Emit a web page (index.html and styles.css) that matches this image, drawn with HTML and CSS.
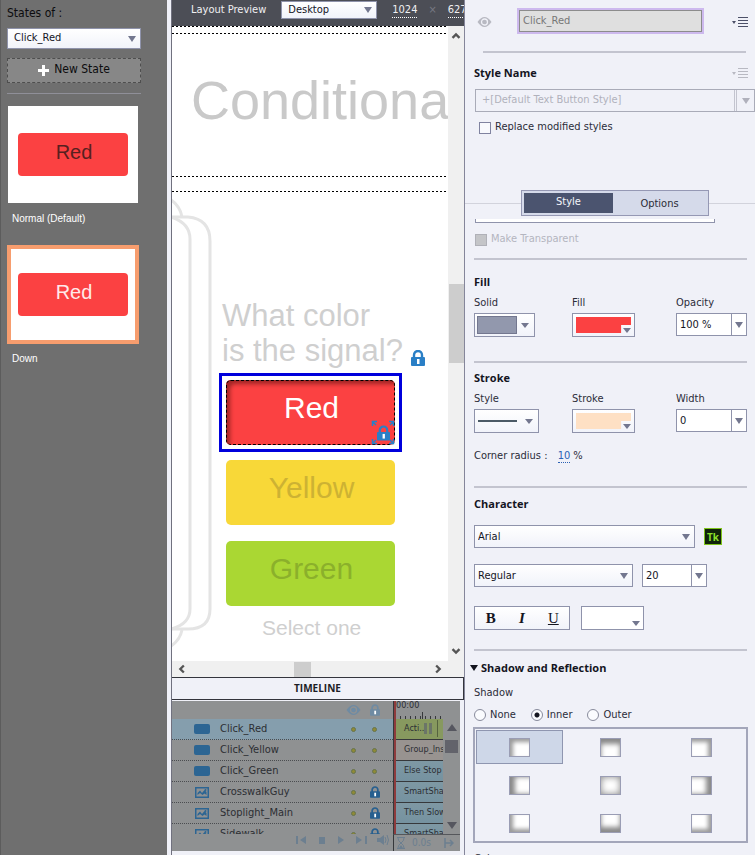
FILE: index.html
```html
<!DOCTYPE html>
<html lang="en">
<head>
<meta charset="utf-8">
<title>Object states</title>
<link rel="stylesheet" href="styles.css">
</head>
<body>
<svg class="defs" aria-hidden="true">
  <symbol id="lock" viewBox="0 0 14 16"><path d="M3 8V5a4 4 0 0 1 8 0v3" fill="none" stroke="currentColor" stroke-width="2.400"/><rect y="7" width="14" height="9" rx="1" fill="currentColor"/><rect class="keyhole" x="6" y="9" width="2.500" height="5"/></symbol>
  <symbol id="eye" viewBox="0 0 14 10"><path d="M0 5Q7-5 14 5Q7 15 0 5Z" fill="currentColor"/><circle cx="7" cy="5" r="3" fill="none" stroke="var(--hole)" stroke-width="1.300"/></symbol>
  <symbol id="image" viewBox="0 0 14 11"><rect x=".75" y=".75" width="12.500" height="9.500" fill="none" stroke="currentColor" stroke-width="1.500"/><path d="M2.500 8V6L5 3.500L7 6L9.500 3L11.500 5V8L9.500 6.500L7.500 8L5 6Z" fill="currentColor"/><circle cx="10.500" cy="3" r="1" fill="currentColor"/></symbol>
  <symbol id="menu" viewBox="0 0 16 11"><path d="M0 4h4L2 7Z" fill="currentColor"/><path d="M6 .5h10M6 3.500h10M6 6.500h10M6 9.500h10" stroke="currentColor"/></symbol>
</svg>
<main class="app">
  <aside class="states">
    <label class="states-label" for="state-of">States of :</label>
    <div class="pick"><select id="state-of"><option>Click_Red</option></select></div>
    <button class="new-state"><svg viewBox="0 0 11 11"><path d="M4 0h3v4h4v3H7v4H4V7H0V4h4Z" fill="#fff"/></svg>New State</button>
    <hr>
    <figure><div class="thumb"><span class="chip">Red</span></div><figcaption>Normal (Default)</figcaption></figure>
    <figure><div class="thumb active"><span class="chip">Red</span></div><figcaption>Down</figcaption></figure>
  </aside>

  <section class="work">
    <header class="preview">
      <label for="device">Layout Preview</label>
      <div class="pick"><select id="device"><option>Desktop</option></select></div>
      <a href="#w">1024</a><i>×</i><a href="#h">627</a>
    </header>
    <div class="stage">
      <div class="canvas">
        <div class="band top"></div>
        <h1>Conditiona</h1>
        <div class="band"></div>
        <div class="slide">
          <svg class="cards" viewBox="0 0 42 470" fill="none" stroke="#e4e4e4" stroke-width="3"><path d="M-1 8Q8 14 10 25"/><path d="M-1 25H16Q38 27 38 49V417Q38 437 16 437H-1"/><path d="M-1 25Q18 31 18 47V417Q18 432 -1 437"/><path d="M10 438Q8 448 -1 454"/></svg>
          <p class="question">What color<br>is the signal?<svg class="lock"><use href="#lock"/></svg></p>
          <div class="selection"><button class="answer red">Red<svg class="lock" viewBox="0 0 24 25"><path d="M1.500 6V1.500H6M1 1L5 5M18 1.500H22.500V6M23 1L19 5M1.500 19V23.500H6M1 24L5 20M18 23.500H22.500V19M23 24L19 20" fill="none" stroke="currentColor" stroke-width="1.500"/><use href="#lock" x="6" y="4" width="13" height="18"/></svg></button></div>
          <button class="answer yellow">Yellow</button>
          <button class="answer green">Green</button>
          <p class="hint">Select one</p>
        </div>
      </div>
      <div class="vbar"><svg viewBox="0 0 8 6"><path d="M1 5L4 2L7 5"/></svg><b></b><svg viewBox="0 0 8 6"><path d="M1 1L4 4L7 1"/></svg></div>
      <div class="hbar"><svg viewBox="0 0 6 8"><path d="M5 1L2 4L5 7"/></svg><b></b><svg viewBox="0 0 6 8"><path d="M1 1L4 4L1 7"/></svg></div>
    </div>
    <h2 class="timeline-title">TIMELINE</h2>
    <div class="timeline">
      <div class="layers">
        <div class="layer head"><span></span><span></span><svg class="eye"><use href="#eye"/></svg><svg class="lock"><use href="#lock"/></svg></div>
        <div class="layer on"><b></b><span>Click_Red</span><i></i><i></i></div>
        <div class="layer"><b></b><span>Click_Yellow</span><i></i><i></i></div>
        <div class="layer"><b></b><span>Click_Green</span><i></i><i></i></div>
        <div class="layer"><svg class="image"><use href="#image"/></svg><span>CrosswalkGuy</span><i></i><svg class="lock"><use href="#lock"/></svg></div>
        <div class="layer"><svg class="image"><use href="#image"/></svg><span>Stoplight_Main</span><i></i><svg class="lock"><use href="#lock"/></svg></div>
        <div class="layer"><svg class="image"><use href="#image"/></svg><span>Sidewalk</span><i></i><svg class="lock"><use href="#lock"/></svg></div>
      </div>
      <div class="tracks">
        <div class="ruler"><span>00:00</span></div>
        <div class="track act">Acti..<svg viewBox="0 0 16 17"><path d="M1 3h3v11H1ZM6 3h3v11H6Z" fill="#6b7568"/><path d="M14.500 0v17" stroke="#56633f"/></svg></div>
        <div class="track grp">Group_Ins</div>
        <div class="track">Else Stop</div>
        <div class="track">SmartSha</div>
        <div class="track">Then Slow</div>
        <div class="track">SmartSha</div>
      </div>
      <div class="tbar"><svg viewBox="0 0 10 7"><path d="M0 7L5 0L10 7Z"/></svg><b></b><svg viewBox="0 0 10 7"><path d="M0 0L5 7L10 0Z"/></svg></div>
      <div class="player">
        <svg viewBox="0 0 94 12"><path d="M1 2h2v8H1ZM11 2v8L5 6ZM24 3h6v7h-6ZM43 2v8L49 6ZM61 2v8L67 6ZM70 2h2v8h-2ZM82 4h3l4-3v10l-4-3h-3Z" fill="currentColor"/><path d="M90 3q2 3 0 6M92 1q3 5 0 10" fill="none" stroke="currentColor"/></svg>
      </div>
      <div class="time"><svg viewBox="0 0 8 12"><path d="M0 .5h8M0 11.500h8M1 1q0 3 3 5q-3 2-3 5M7 1q0 3-3 5q3 2 3 5" fill="none" stroke="currentColor"/><path d="M2 11l2-3l2 3Z" fill="currentColor"/></svg><span>0.0s</span><svg viewBox="0 0 10 10"><path d="M1 0v10M1 5h8M6 2l3 3l-3 3" fill="none" stroke="currentColor" stroke-width="1.500"/></svg></div>
    </div>
  </section>

  <aside class="props">
    <div class="object"><svg class="eye"><use href="#eye"/></svg><input aria-label="Object name" value="Click_Red"><svg class="menu"><use href="#menu"/></svg></div>
    <hr class="first">
    <div class="style-head"><h3>Style Name</h3><svg class="menu"><use href="#menu"/></svg></div>
    <div class="pick style-name"><select aria-label="Style name" disabled><option>+[Default Text Button Style]</option></select></div>
    <label class="check replace"><input type="checkbox">Replace modified styles</label>
    <div class="tabs"><div><button class="current">Style</button><button>Options</button></div></div>
    <div class="cut"></div>
    <label class="check"><input type="checkbox" disabled>Make Transparent</label>
    <hr>
    <section class="fill">
      <h3>Fill</h3>
      <div class="trio">
        <div><label for="solid">Solid</label><button id="solid" class="swatch solid"><span></span></button></div>
        <div><label for="fill">Fill</label><button id="fill" class="swatch color"><span></span></button></div>
        <div><label for="opacity">Opacity</label><div class="pick num"><select id="opacity"><option>100 %</option></select></div></div>
      </div>
    </section>
    <hr>
    <section class="stroke">
      <h3>Stroke</h3>
      <div class="trio">
        <div><label for="line">Style</label><button id="line" class="swatch line"><span></span></button></div>
        <div><label for="stroke">Stroke</label><button id="stroke" class="swatch color peach"><span></span></button></div>
        <div><label for="width">Width</label><div class="pick num"><select id="width"><option>0</option></select></div></div>
      </div>
      <p class="radius">Corner radius : <a href="#radius">10</a> %</p>
    </section>
    <hr>
    <section class="character">
      <h3>Character</h3>
      <div class="row"><div class="pick family"><select aria-label="Font family"><option>Arial</option></select></div><button class="tk">Tk</button></div>
      <div class="row"><div class="pick weight"><select aria-label="Font style"><option>Regular</option></select></div><div class="pick num"><select aria-label="Font size"><option>20</option></select></div></div>
      <div class="row"><div class="biu"><button><b>B</b></button><button><i>I</i></button><button><u>U</u></button></div><button class="swatch color white" aria-label="Text colour"><span></span></button></div>
    </section>
    <hr>
    <section class="shadow">
      <h3>Shadow and Reflection</h3>
      <p>Shadow</p>
      <div class="radios"><label><input type="radio" name="s">None</label><label><input type="radio" name="s" checked>Inner</label><label><input type="radio" name="s">Outer</label></div>
      <div class="presets">
        <button class="tl chosen"><span></span></button><button class="t"><span></span></button><button class="tr"><span></span></button>
        <button class="l"><span></span></button><button class="c"><span></span></button><button class="r"><span></span></button>
        <button class="bl"><span></span></button><button class="b"><span></span></button><button class="br"><span></span></button>
      </div>
      <p class="next">Color</p>
    </section>
  </aside>
</main>
</body>
</html>
```
FILE: styles.css
```css
* { box-sizing: border-box; margin: 0; padding: 0; }
body { background: #f0f1f8; color: #2b2c38; font: 11px/16px "DejaVu Sans Condensed", "Noto Sans", sans-serif; }
button, input, select { font: inherit; color: inherit; border: 0; border-radius: 0; background: none; }
button { line-height: 1; }
svg { display: block; flex: none; }
h3 { font: bold 11px/16px "Open Sans", sans-serif; color: #14151f; }
.defs { position: absolute; width: 0; height: 0; }
.keyhole { fill: #fff; }
.lock { width: 14px; height: 16px; color: #2a7fc6; }
.eye { width: 15px; height: 10px; --hole: #f0f1f8; }

.app { display: grid; grid-template-columns: 167px minmax(0, 1fr) 290px; height: 100vh; overflow: hidden; }

/* drop-downs */
.pick { position: relative; height: 23px; border: 1px solid #8f93ab; background: linear-gradient(#fff, #f1f3fa); }
.pick select { display: block; appearance: none; width: 100%; height: 100%; padding-left: 6px; color: #14151f; opacity: 1; }
.pick::after { content: ""; position: absolute; right: 4px; top: 50%; margin-top: -3px; border: 4px solid transparent; border-top: 6px solid #73778f; border-bottom: 0; pointer-events: none; }
.num { width: 71px; background: linear-gradient(#8f93ab, #8f93ab) right 14px top / 1px 100% no-repeat, #fff; }
.num select { padding-left: 3px; }
.num::after { right: 3px; }

/* states panel */
.states { padding: 5px 26px 0 6px; background: #6f6f6f; border-left: 1px solid #5c5c5c; color: #0c0c0e; }
.states-label { display: block; font-size: 12px; }
.states .pick { height: 21px; margin-top: 7px; }
.states .pick select { padding-bottom: 2px; }
.new-state { display: flex; align-items: center; justify-content: center; gap: 5px; width: 100%; height: 25px; margin-top: 9px; padding-bottom: 4px; border: 1px dashed #4e4e4e; background: #878787; font-size: 12px; }
.new-state svg { width: 11px; height: 11px; margin-top: 4px; }
.states hr { border: 0; border-top: 1px solid #8f8f98; margin: 10px 0 11px; }
.thumb { display: flex; height: 99px; padding: 10px; border: 1px solid #6f6f6f; background: #fff; width: 132px; }
.thumb.active { border: 4px solid #f79d6e; padding: 7px; }
.chip { flex: 1; height: 43px; margin: 17px 0 0; border-radius: 4px; background: #fb4142; color: #57201f; font: 20px/38px "Liberation Sans", sans-serif; text-align: center; }
.chip { padding-left: 2px; }
.active .chip { color: #ffe9e9; }
.states figcaption { margin: 7px 0 18px 5px; font: 10px/16px "Liberation Sans", sans-serif; color: #fff; }

/* work area */
.work { display: flex; flex-direction: column; min-width: 0; border-left: 4px solid #f0f1f8; border-right: 1px solid #85869a; box-shadow: inset 1px 0 #70717f; padding-left: 1px; }
.preview { display: flex; align-items: flex-start; height: 26px; padding: 2px 0 0 19px; background: #4c4e56; color: #f0f0f2; overflow: hidden; white-space: nowrap; }
.preview .pick { flex: none; width: 96px; height: 18px; margin: -1px 15px 0; }
.preview .pick select { padding-bottom: 3px; }
.preview a { color: inherit; text-decoration: none; border-bottom: 1px dotted #fff; line-height: 15px; }
.preview i { margin: 0 11px; font-style: normal; color: #777983; }
.stage { display: grid; grid-template: minmax(0, 1fr) 16px / minmax(0, 1fr) 16px; flex: 1; min-height: 0; background: #f0f0f0; }
.canvas { background: #fff; overflow: hidden; font-family: "Liberation Sans", sans-serif; }
.band { height: 16px; background: repeating-linear-gradient(90deg, #000 0 2px, transparent 2px 4px) top / 100% 1px no-repeat, repeating-linear-gradient(90deg, #000 0 2px, transparent 2px 4px) bottom / 100% 1px no-repeat; }
.band.top { height: 8px; }
h1 { height: 142px; padding-left: 19px; font: 54px/132px "Liberation Sans", sans-serif; color: #c9c9c9; }
.slide { position: relative; padding: 106px 0 0 47px; }
.cards { position: absolute; left: 0; top: 0; width: 42px; height: 470px; }
.question { margin-left: 3px; font-size: 31px; line-height: 35px; color: #cfcfcf; white-space: nowrap; }
.question .lock { display: inline-block; margin: 0 0 -5px 8px; }
.selection { width: 183px; margin-top: 5px; border: 3px solid #0000dc; padding: 4px; }
.answer { position: relative; display: block; width: 169px; height: 65px; margin: 0 0 16px 7px; padding: 0 0 9px 2px; border-radius: 5px; font-size: 30px; }
.answer.red { width: 100%; margin: 0; outline: 1px dashed #000; outline-offset: -1px; background: #fb4142; box-shadow: inset 4px 4px 4px #a02626; color: #fff; }
.red .lock { position: absolute; right: 0; bottom: 0; width: 24px; height: 25px; }
.selection + .answer { margin-top: 8px; }
.yellow { background: #f8d838; color: #cdb233; }
.green { background: #aad733; color: #8bb02b; }
.hint { margin: -6px 0 0 43px; font-size: 21px; line-height: 24px; color: #cfcfcf; }
.vbar, .hbar { display: flex; align-items: center; justify-content: space-between; }
.vbar { flex-direction: column; padding: 6px 0; }
.vbar svg { width: 10px; height: 7px; }
.hbar { padding: 0 6px; }
.hbar svg { width: 7px; height: 10px; }
.vbar path, .hbar path { fill: none; stroke: #555; stroke-width: 2; }
.vbar b { width: 15px; height: 79px; background: #cdcdcd; margin-top: -40px; }
.hbar b { width: 17px; height: 15px; background: #cdcdcd; margin-right: 16px; }
.timeline-title { height: 23px; border: 1px solid #33343c; border-width: 1px 1px 1px 0; text-align: center; font: bold 10px/21px "Open Sans", sans-serif; color: #1c1d26; }

/* timeline */
.timeline { display: grid; grid-template: 133px 17px / minmax(0, 1fr) 50px 17px; margin: 1px 4px 4px 0; background: #8f9192; color: #2c2e33; overflow: hidden; }
.timeline .lock { width: 10px; height: 12px; color: #275f8f; }
.timeline .keyhole { fill: #8f9192; }
.layers, .tracks { overflow: hidden; }
.layer { display: grid; grid-template-columns: 16px 1fr 15px 15px; align-items: center; justify-items: center; gap: 0 6px; height: 21px; padding: 0 11px 0 22px; border-bottom: 1px dotted #4b4d50; }
.timeline .head { height: 18px; border: 0; }
.timeline .head svg { color: #6f8ba3; --hole: #8f9192; }
.layer.on { background: #859ead; }
.layer span { justify-self: start; margin-left: 4px; }
.layer b { width: 16px; height: 10px; border-radius: 2px; background: #2c6593; }
.layer i { width: 5px; height: 5px; border: 1px solid #66734e; border-radius: 50%; background: #8f8a35; }
.image { width: 14px; height: 11px; color: #2c6593; }
.tracks { border-left: 1px solid #36383b; box-shadow: inset 2px 0 #8e3b3d; padding-left: 2px; }
.ruler { height: 18px; font-size: 9px; line-height: 9px; background: repeating-linear-gradient(90deg, #36383b 0 1px, transparent 1px 5px) 4px 100% / 100% 3px no-repeat, linear-gradient(#36383b, #36383b) 26px 100% / 1px 7px no-repeat; }
.track { position: relative; height: 21px; padding-left: 8px; border-bottom: 1px solid #36383b; background: linear-gradient(#7e98a4, #7592a0); font-size: 9px; line-height: 18px; white-space: nowrap; overflow: hidden; }
.act { background: #87995f; }
.act svg { position: absolute; left: 27px; top: 1px; width: 16px; height: 17px; }
.grp { background: #989390; }
.tbar { display: flex; flex-direction: column; align-items: center; padding: 23px 0 5px; fill: #55565f; }
.tbar svg { width: 10px; height: 7px; }
.tbar b { width: 13px; height: 13px; margin: 9px 0 auto; background: #62636b; }
.player, .time { color: #6c7f90; }
.player svg { width: 94px; height: 12px; margin-left: auto; margin-right: 4px; }
.time { grid-column: span 2; display: flex; align-items: center; gap: 7px; padding-left: 3px; border-left: 1px solid #36383b; border-top: 1px solid #55575b; font-size: 10px; }
.time svg:first-child { width: 8px; height: 12px; }
.time svg:last-child { width: 10px; height: 10px; margin-left: 6px; }

/* properties panel */
.props { padding: 8px 5px 0 9px; overflow: hidden; }
.props hr { height: 2px; border: 0; background: #c3c4cf; }
.props .first { margin: 17px 4px 12px 9px; }
.object { display: flex; align-items: center; height: 26px; }
.object .eye { margin: 2px 25px 0 3px; color: #b8b9c2; }
.object input { width: 187px; height: 26px; border: 2px solid #cdb9ee; padding: 0 4px 1px; background: #dfdfdf; box-shadow: inset 0 0 0 1px #8c8c8c; color: #777; }
.menu { width: 16px; height: 11px; margin-left: auto; margin-right: 2px; color: #4c5068; }
.object .menu { margin-top: 3px; }
.style-head { display: flex; align-items: center; }
.style-head .menu { color: #b8b9c2; }
.style-name { margin: 8px -5px 7px 1px; border-color: #a9abb8; background: linear-gradient(90deg, #c3c4cf 0 1px, transparent 1px 2px, #c3c4cf 2px 3px) right 17px top / 3px 100% no-repeat; }
.style-name select { color: #b0b1bc; padding-bottom: 2px; }
.style-name::after { border-top-color: #b0b1bc; }
.check { display: flex; align-items: center; gap: 4px; height: 16px; }
.check input { appearance: none; width: 12px; height: 12px; border: 1px solid #8083a0; background: #f8f9fd; margin-top: 1px; }
.check input:disabled { background: #c4c5c8; border-color: #b0b1b8; }
.check:has(:disabled) { color: #b4b5bf; margin: 8px 0 11px 1px; }
.replace { margin: 0 0 55px 5px; }
.tabs { display: flex; justify-content: center; margin: 0 -5px 3px -9px; padding-left: 10px; background: linear-gradient(#d2d3dc, #d2d3dc) 0 13px / 100% 1px no-repeat; }
.tabs div { display: flex; width: 188px; height: 26px; padding: 2px; border: 1px solid #9598b4; background: #d5daea; }
.tabs button { flex: 1; }
.tabs .current { flex: none; width: 89px; background: #4b546f; color: #f4f5fa; padding-bottom: 3px; }
.cut { width: 240px; height: 4px; margin-left: 1px; border: 1px solid #8f93ab; border-top: 0; background: #fff; }
.props > hr:not(.first) { margin-right: 3px; }
.fill { padding: 14px 0 24px; }
.stroke { padding: 7px 0 22px; }
.trio { display: grid; grid-template-columns: 98px 104px 1fr; margin-top: 5px; }
.trio label { display: block; margin-bottom: 2px; }
.swatch { position: relative; display: block; width: 63px; height: 24px; padding: 3px; border: 1px solid #8f93ab; background: linear-gradient(#fff, #f1f3fa); }
.swatch::after { content: ""; position: absolute; border: 4px solid transparent; border-top: 5px solid #73778f; border-bottom: 0; }
.swatch span { display: block; height: 100%; }
.color::after { right: 3px; bottom: 3px; }
.color span { background: #fb4142; clip-path: polygon(0 0, 100% 0, 100% 50%, 82% 50%, 82% 100%, 0 100%); }
.peach span { background: #fee0c4; }
.white { background: #fff; }
.white span { background: #fff; }
.solid { width: 61px; padding: 2px; }
.solid span { width: 40px; border: 1px solid #73778f; background: #9298ad; }
.solid::after, .line::after { right: 5px; top: 9px; }
.line { width: 65px; }
.line span { width: 39px; height: 2px; background: #4b5a66; }
.radius { margin-top: 15px; }
.radius a { margin-left: 7px; color: #2c62b5; text-decoration: none; border-bottom: 1px dotted #2c62b5; }
.character { padding: 8px 0 19px; }
.row { display: flex; gap: 9px; }
.row:nth-of-type(1) { margin: 13px 0 16px; }
.row:nth-of-type(3) { margin-top: 19px; gap: 11px; }
.family { width: 221px; }
.weight { width: 159px; }
.row .pick:not(.num) select { padding-left: 3px; }
.row .num { width: 65px; }
.tk { width: 18px; height: 17px; margin-top: 3px; border: 1px solid #7fc51c; background: #10240a; color: #8be02a; font: bold 10px/1 "Open Sans", sans-serif; }
.biu { display: flex; width: 96px; border: 1px solid #8f93ab; background: linear-gradient(#fff, #f1f3fa); font: 15px/1 "Liberation Serif", serif; color: #14151f; }
.biu button { flex: 1; font-weight: bold; }
.biu u { font-weight: normal; }
.shadow { padding-top: 9px; }
.shadow h3::before { content: ""; display: inline-block; border: 4px solid transparent; border-top: 6px solid #14151f; border-bottom: 0; margin: 0 3px 1px -4px; }
.shadow p { margin-top: 9px; }
.radios { display: flex; gap: 15px; margin: 6px 0 4px; }
.radios label { display: flex; align-items: center; gap: 4px; }
.radios input { appearance: none; width: 12px; height: 12px; border: 1px solid #888b9c; border-radius: 50%; background: #fafbfe; }
.radios input:checked { background: radial-gradient(#14151f 0 2px, #fafbfe 3px); }
.presets { display: grid; grid-template-columns: repeat(3, 1fr); grid-auto-rows: 34px; gap: 4px; margin: 0 2px 0 -1px; padding: 1px; border: 2px solid #a3a6ba; }
.presets button { display: grid; place-items: center; border: 1px solid transparent; }
.presets .chosen { background: #ced7e8; border-color: #8f96b0; }
.presets span { width: 21px; height: 19px; border: 1px solid #9a9db4; background: #fff; }
.presets .tl span { box-shadow: inset 3px 3px 4px #999; }
.presets .t span { box-shadow: inset 0 5px 5px #888; }
.presets .tr span { box-shadow: inset -3px 3px 4px #999; }
.presets .l span { box-shadow: inset 5px 0 5px #888; }
.presets .c span { box-shadow: inset 0 0 7px #888; }
.presets .r span { box-shadow: inset -5px 0 5px #888; }
.presets .bl span { box-shadow: inset 3px -3px 4px #999; }
.presets .b span { box-shadow: inset 0 -5px 5px #888; }
.presets .br span { box-shadow: inset -3px -3px 4px #999; }
.shadow .next { margin-top: 8px; }
```
